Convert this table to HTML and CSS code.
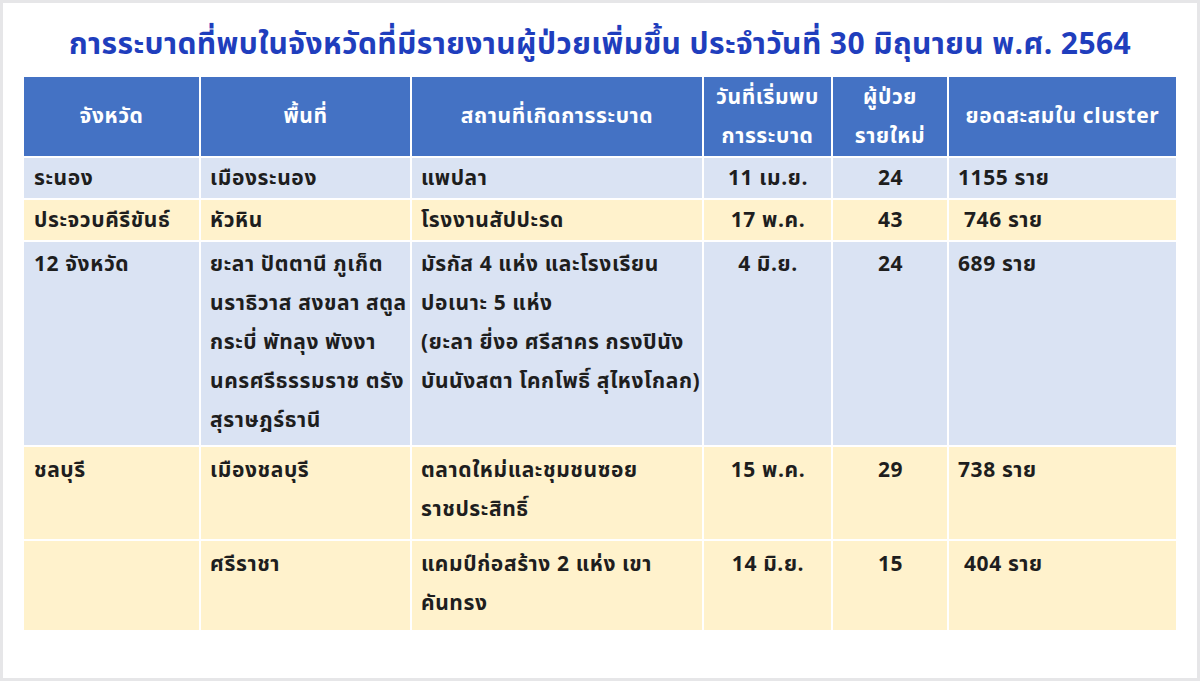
FILE: index.html
```html
<!DOCTYPE html>
<html lang="th">
<head>
<meta charset="utf-8">
<title>การระบาดที่พบในจังหวัด</title>
<link rel="stylesheet" href="styles.css">
</head>
<body>
<div class="panel">
  <h1 class="title">การระบาดที่พบในจังหวัดที่มีรายงานผู้ป่วยเพิ่มขึ้น ประจำวันที่ 30 มิถุนายน พ.ศ. 2564</h1>
  <table class="grid">
    <colgroup>
      <col class="c1"><col class="c2"><col class="c3"><col class="c4"><col class="c5"><col class="c6">
    </colgroup>
    <thead>
      <tr class="head">
        <th>จังหวัด</th>
        <th>พื้นที่</th>
        <th>สถานที่เกิดการระบาด</th>
        <th>วันที่เริ่มพบ<br>การระบาด</th>
        <th>ผู้ป่วย<br>รายใหม่</th>
        <th>ยอดสะสมใน cluster</th>
      </tr>
    </thead>
    <tbody>
      <tr class="blue r1">
        <td>ระนอง</td>
        <td>เมืองระนอง</td>
        <td>แพปลา</td>
        <td class="ctr">11 เม.ย.</td>
        <td class="ctr">24</td>
        <td>1155 ราย</td>
      </tr>
      <tr class="cream r1">
        <td>ประจวบคีรีขันธ์</td>
        <td>หัวหิน</td>
        <td>โรงงานสัปปะรด</td>
        <td class="ctr">17 พ.ค.</td>
        <td class="ctr">43</td>
        <td class="ind">746 ราย</td>
      </tr>
      <tr class="blue r3">
        <td>12 จังหวัด</td>
        <td>ยะลา ปัตตานี ภูเก็ต<br>นราธิวาส สงขลา สตูล<br>กระบี่ พัทลุง พังงา<br>นครศรีธรรมราช ตรัง<br>สุราษฎร์ธานี</td>
        <td>มัรกัส 4 แห่ง และโรงเรียน<br>ปอเนาะ 5 แห่ง<br>(ยะลา ยี่งอ ศรีสาคร กรงปินัง<br>บันนังสตา โคกโพธิ์ สุไหงโกลก)</td>
        <td class="ctr">4 มิ.ย.</td>
        <td class="ctr">24</td>
        <td>689 ราย</td>
      </tr>
      <tr class="cream r4">
        <td>ชลบุรี</td>
        <td>เมืองชลบุรี</td>
        <td>ตลาดใหม่และชุมชนซอย<br>ราชประสิทธิ์</td>
        <td class="ctr">15 พ.ค.</td>
        <td class="ctr">29</td>
        <td>738 ราย</td>
      </tr>
      <tr class="cream r5">
        <td></td>
        <td>ศรีราชา</td>
        <td>แคมป์ก่อสร้าง 2 แห่ง เขา<br>คันทรง</td>
        <td class="ctr">14 มิ.ย.</td>
        <td class="ctr">15</td>
        <td class="ind">404 ราย</td>
      </tr>
    </tbody>
  </table>
</div>
</body>
</html>
```

FILE: styles.css
```css
html, body {
  margin: 0;
  padding: 0;
}
body {
  background: #e6e6e8;
  width: 1200px;
  height: 681px;
  overflow: hidden;
  font-family: Tahoma, "Noto Sans Thai", "Noto Sans Thai UI", Loma, Garuda, "Noto Sans", sans-serif;
}
.panel {
  margin: 3px;
  height: 675px;
  background: #ffffff;
  padding: 0 21px;
  box-sizing: border-box;
}
.title {
  margin: 0 0 12px 0;
  padding-top: 22px;
  height: 40px;
  line-height: 40px;
  font-size: 30px;
  letter-spacing: 0.4px;
  font-weight: bold;
  color: #1f3ebd;
  text-align: center;
  white-space: nowrap;
}
.grid {
  width: 1152px;
  border-collapse: collapse;
  table-layout: fixed;
  font-size: 21px;
  letter-spacing: 0.6px;
  font-weight: bold;
  color: #1e1e1e;
}
.c1 { width: 176px; }
.c2 { width: 211px; }
.c3 { width: 292px; }
.c4 { width: 129px; }
.c5 { width: 116px; }
.c6 { width: 228px; }
.grid th, .grid td {
  border: 2px solid #ffffff;
  line-height: 39px;
}
.grid th {
  background: #4472c4;
  color: #ffffff;
  height: 80px;
  padding: 0 4px;
  text-align: center;
  vertical-align: middle;
  font-weight: bold;
  box-sizing: border-box;
  white-space: nowrap;
}
.grid tr.head th {
  border-top: none;
}
.grid th:first-child, .grid td:first-child { border-left: none; }
.grid th:last-child, .grid td:last-child { border-right: none; }
.grid td {
  padding: 1px 8px 0 9px;
  vertical-align: top;
  text-align: left;
  white-space: nowrap;
  box-sizing: border-box;
}
.grid td:first-child { padding-left: 10px; }
.grid tbody tr:last-child td { border-bottom: none; }
.grid td.ctr { text-align: center; }
.grid td.ind { padding-left: 15px; }
.blue td { background: #dae3f3; }
.cream td { background: #fff2cc; }
.r1 td { height: 41px; }
.r3 td { height: 205px; padding-top: 3px; }
.r4 td { height: 94px; padding-top: 4px; }
.r5 td { height: 90px; padding-top: 4px; }
```
